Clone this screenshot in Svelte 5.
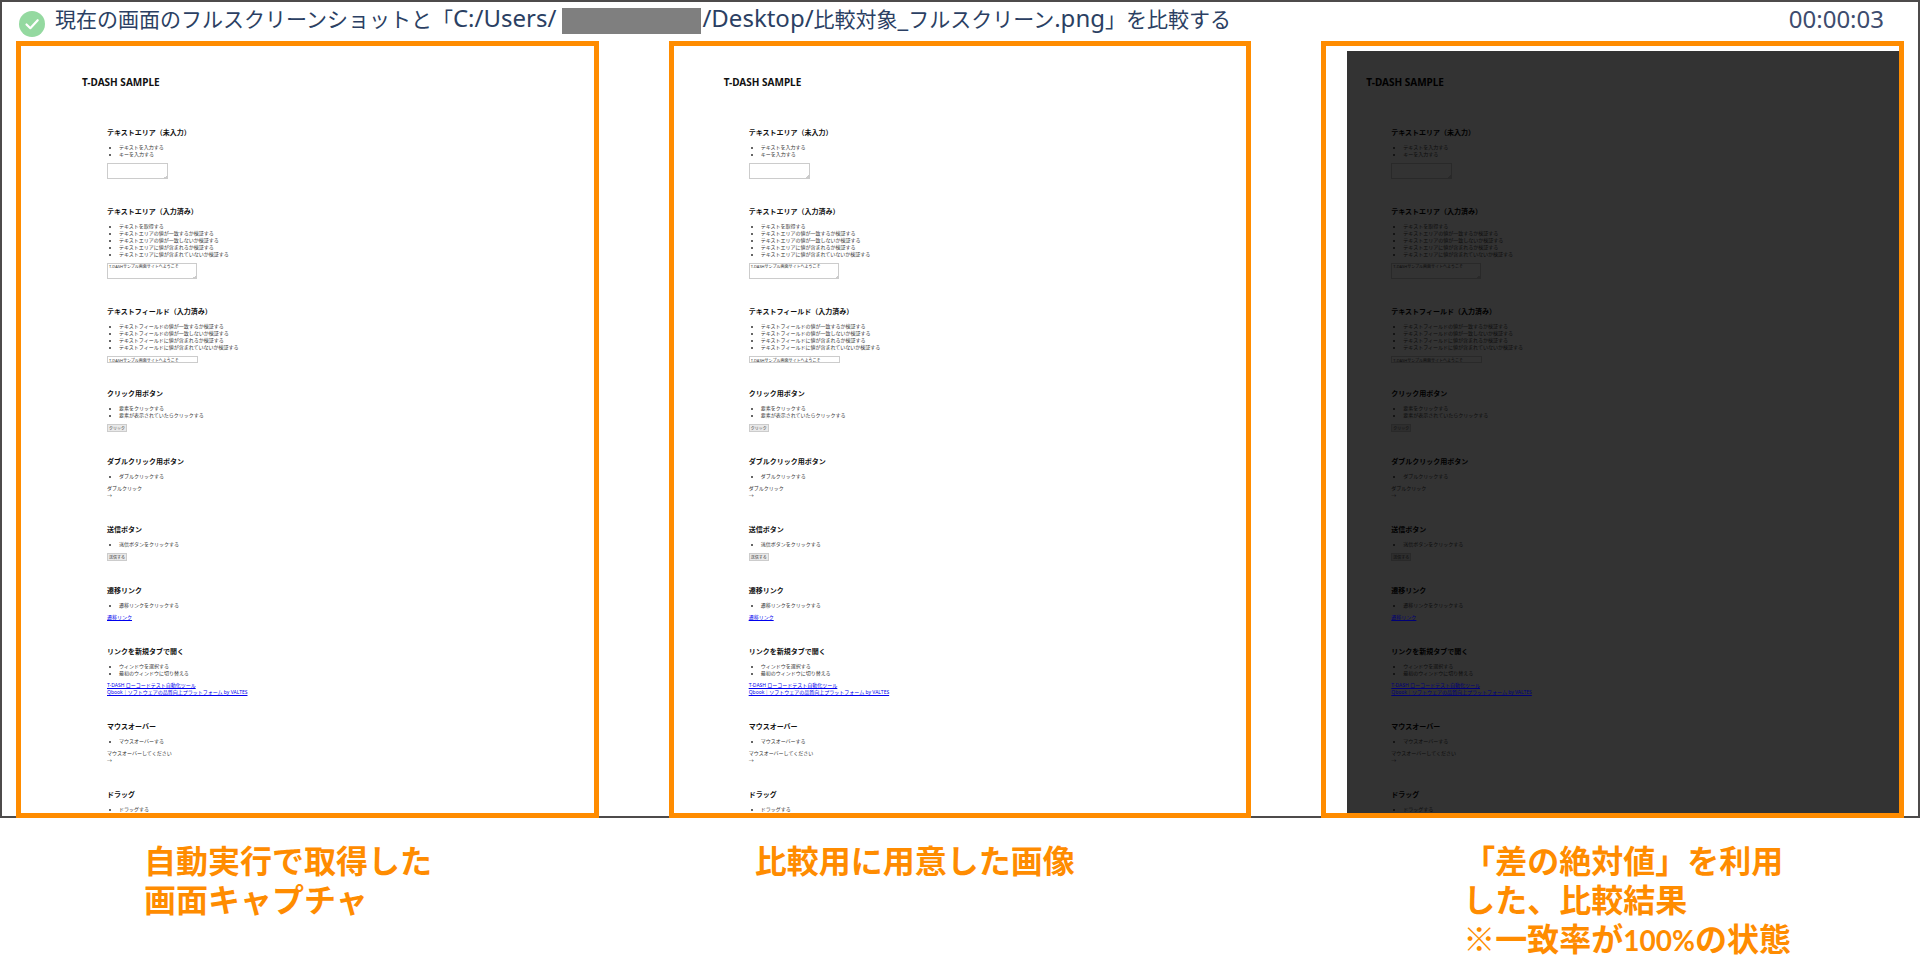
<script lang="ts">
  type Block =
    | { kind: 'textarea'; value: string; wide?: boolean }
    | { kind: 'input'; value: string }
    | { kind: 'button'; label: string }
    | { kind: 'text'; lines: string[] }
    | { kind: 'links'; lines: string[] }
    | { kind: 'none' };

  interface Section {
    title: string;
    items: string[];
    block: Block;
  }

  const welcome = 'T-DASHサンプル画面サイトへようこそ';

  const sections: Section[] = [
    {
      title: 'テキストエリア（未入力）',
      items: ['テキストを入力する', 'キーを入力する'],
      block: { kind: 'textarea', value: '' }
    },
    {
      title: 'テキストエリア（入力済み）',
      items: [
        'テキストを取得する',
        'テキストエリアの値が一致するか検証する',
        'テキストエリアの値が一致しないか検証する',
        'テキストエリアに値が含まれるか検証する',
        'テキストエリアに値が含まれていないか検証する'
      ],
      block: { kind: 'textarea', value: welcome, wide: true }
    },
    {
      title: 'テキストフィールド（入力済み）',
      items: [
        'テキストフィールドの値が一致するか検証する',
        'テキストフィールドの値が一致しないか検証する',
        'テキストフィールドに値が含まれるか検証する',
        'テキストフィールドに値が含まれていないか検証する'
      ],
      block: { kind: 'input', value: welcome }
    },
    {
      title: 'クリック用ボタン',
      items: ['要素をクリックする', '要素が表示されていたらクリックする'],
      block: { kind: 'button', label: 'クリック' }
    },
    {
      title: 'ダブルクリック用ボタン',
      items: ['ダブルクリックする'],
      block: { kind: 'text', lines: ['ダブルクリック', '→'] }
    },
    {
      title: '送信ボタン',
      items: ['送信ボタンをクリックする'],
      block: { kind: 'button', label: '送信する' }
    },
    {
      title: '遷移リンク',
      items: ['遷移リンクをクリックする'],
      block: { kind: 'links', lines: ['遷移リンク'] }
    },
    {
      title: 'リンクを新規タブで開く',
      items: ['ウィンドウを選択する', '最初のウィンドウに切り替える'],
      block: {
        kind: 'links',
        lines: [
          'T-DASH ローコードテスト自動化ツール',
          'Qbook｜ソフトウェアの品質向上プラットフォーム by VALTES'
        ]
      }
    },
    {
      title: 'マウスオーバー',
      items: ['マウスオーバーする'],
      block: { kind: 'text', lines: ['マウスオーバーしてください', '→'] }
    },
    {
      title: 'ドラッグ',
      items: ['ドラッグする'],
      block: { kind: 'none' }
    }
  ];

  const shots = ['captured', 'expected', 'diff'];
</script>

<main>
  <section class="result">
    <header>
      <svg class="check" viewBox="0 0 26 26" aria-hidden="true">
        <circle cx="13" cy="13" r="13" fill="#94d9a0" />
        <path d="M7.5 13.5l3.8 3.7 7.4-8" fill="none" stroke="#fff" stroke-width="2.2" stroke-linecap="round" stroke-linejoin="round" />
      </svg>
      <p class="step">
        現在の画面のフルスクリーンショットと「<span class="latin">C:/Users/</span><span class="redacted"></span><span class="latin">/Desktop/</span>比較対象<span class="latin">_</span>フルスクリーン<span class="latin">.png</span>」を比較する
      </p>
      <time>00:00:03</time>
    </header>

    <div class="shots">
      {#each shots as shot}
        <div class="frame {shot}">
          <article class="page">
            <h1>T-DASH SAMPLE</h1>
            {#each sections as { title, items, block }}
              <section class="sample">
                <h2>{title}</h2>
                <ul>
                  {#each items as item}
                    <li>{item}</li>
                  {/each}
                </ul>
                {#if block.kind === 'textarea'}
                  <textarea class:wide={block.wide} aria-label={title} value={block.value}></textarea>
                {:else if block.kind === 'input'}
                  <input type="text" aria-label={title} value={block.value} />
                {:else if block.kind === 'button'}
                  <div class="action"><button type="button">{block.label}</button></div>
                {:else if block.kind === 'text'}
                  {#each block.lines as line}
                    <p>{line}</p>
                  {/each}
                {:else if block.kind === 'links'}
                  {#each block.lines as line}
                    <p><a href="#top">{line}</a></p>
                  {/each}
                {/if}
              </section>
            {/each}
          </article>
        </div>
      {/each}
    </div>
  </section>

  <div class="captions">
    <p class="captured">自動実行で取得した<br />画面キャプチャ</p>
    <p class="expected">比較用に用意した画像</p>
    <p class="diff">「差の絶対値」を利用<br />した、比較結果<br />※一致率が<span class="number">100%</span>の状態</p>
  </div>
</main>

<style>
  :global(body) {
    margin: 0;
    background: #fff;
  }

  main {
    font-family: 'Noto Sans', 'Noto Sans CJK JP', sans-serif;
  }

  h1,
  h2,
  p,
  ul {
    margin: 0;
    padding: 0;
  }

  .result {
    border: 2px solid #4d4b4b;
  }

  header {
    display: flex;
    align-items: flex-start;
    box-sizing: border-box;
    height: 39px;
    padding: 0 34px 0 17px;
    color: #2b3f63;
  }

  .check {
    width: 26px;
    height: 26px;
    margin-top: 9px;
    flex-shrink: 0;
  }

  .step {
    flex: 1;
    margin-left: 10px;
    font-family: 'Noto Sans CJK JP', sans-serif;
    font-size: 21px;
    line-height: 32px;
    white-space: nowrap;
  }

  .latin {
    font-family: 'Noto Sans', sans-serif;
    font-size: 24px;
  }

  .redacted {
    display: inline-block;
    width: 139px;
    height: 26px;
    margin: 0 1px 0 6px;
    background: #7f7f7f;
    vertical-align: middle;
  }

  time {
    font-size: 24px;
    line-height: 34px;
    color: #3d4c6e;
  }

  .shots,
  .captions {
    display: grid;
    grid-template-columns: repeat(3, minmax(0, 1fr));
    gap: 70px;
  }

  /* the frames run over the bottom edge of the result panel */
  .shots {
    margin: 0 14px -2px;
  }

  .frame {
    overflow: hidden;
    border: 5px solid #ff8c00;
    padding-top: 5px;
  }

  .frame.captured {
    padding-left: 42px;
  }

  .frame.expected {
    padding-left: 31px;
  }

  .frame.diff {
    padding-left: 21px;
  }

  .page {
    --text: #333;
    --heading: #111;
    --line: #ccc;
    --field: #fff;
    --button: #e9e9e9;
    --link: #0000ee;
    padding: 24px 0 0 19px;
    color: var(--text);
    font-size: 5px;
    line-height: 7px;
    white-space: nowrap;
  }

  .diff .page {
    --text: #0c0c0c;
    --heading: #000;
    --line: #292929;
    --field: #333;
    --button: #2e2e2e;
    --link: #000078;
    background: #333;
  }

  h1 {
    margin-bottom: 39px;
    color: var(--heading);
    font-size: 10px;
    line-height: 14px;
  }

  h2 {
    margin-bottom: 6px;
    color: var(--heading);
    font-size: 7px;
    line-height: 10px;
  }

  .sample {
    margin: 0 0 26px 25px;
  }

  .sample:last-child {
    margin-bottom: 0;
  }

  ul {
    margin-bottom: 5px;
    padding-left: 12px;
  }

  .sample:last-child ul {
    margin-bottom: 0;
  }

  textarea,
  input,
  button {
    display: block;
    box-sizing: border-box;
    border: 1px solid var(--line);
    border-radius: 0;
    color: var(--text);
    font-family: inherit;
    font-size: 4px;
    line-height: 5px;
  }

  textarea {
    width: 61px;
    height: 16px;
    margin-bottom: 28px;
    padding: 0 1px;
    resize: none;
    overflow: hidden;
    background: linear-gradient(135deg, transparent 50%, var(--line) 50%) right bottom / 3px 3px no-repeat var(--field);
  }

  textarea.wide {
    width: 90px;
    margin-bottom: 28px;
  }

  input {
    width: 91px;
    height: 7px;
    padding: 0 1px;
    background: var(--field);
  }

  .action {
    height: 7px;
  }

  button {
    width: 20px;
    height: 8px;
    padding: 0;
    background: var(--button);
  }

  a {
    color: var(--link);
  }

  .captions {
    padding: 22px 16px 0;
    color: #ff8c00;
    font-family: 'Noto Sans CJK JP', sans-serif;
    font-size: 32px;
    font-weight: 700;
    line-height: 39px;
    white-space: nowrap;
  }

  .captions .captured {
    padding-left: 128px;
  }

  .captions .expected {
    padding-left: 86px;
  }

  .captions .diff {
    padding-left: 142px;
  }

  .number {
    font-family: Lato, sans-serif;
    font-size: 28px;
  }
</style>
